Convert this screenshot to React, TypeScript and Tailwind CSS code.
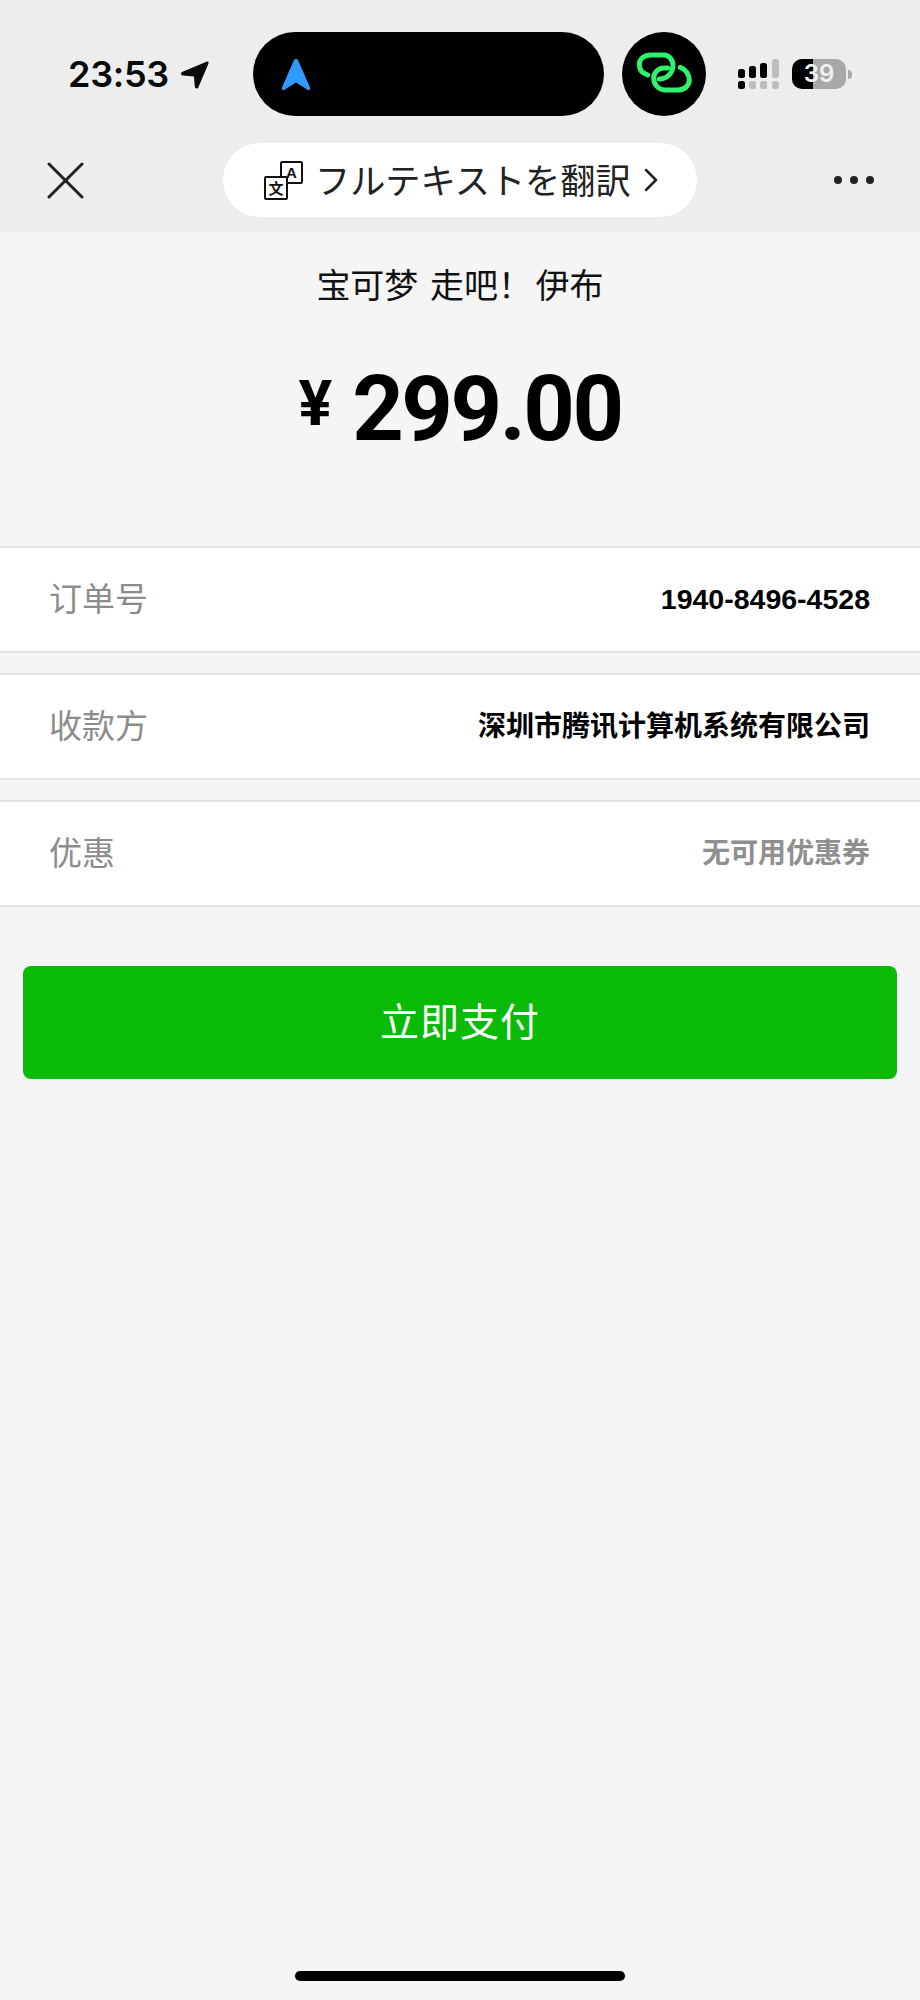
import React from "react";

const cjk = "font-['Liberation_Sans','Noto_Sans_CJK_SC',sans-serif]";

const rows = [
  { label: "订单号", value: "1940-8496-4528", valueClass: "text-black font-bold text-[28.5px]" },
  { label: "收款方", value: "深圳市腾讯计算机系统有限公司", valueClass: "text-black font-bold text-[28px]" },
  { label: "优惠", value: "无可用优惠券", valueClass: "text-[#8f8f8f] font-bold text-[28px]" },
];

const StatusBar = () => (
  <div className="flex items-center h-[84px] pl-[68px]">
    <span className="w-[101px] font-['Inter',sans-serif] text-[36px] font-semibold tracking-[-0.3px] text-[#0a0a0a] leading-none">
      23:53
    </span>
    {/* location arrow */}
    <svg className="ml-[11px] w-[30px] h-[30px]" viewBox="0 0 30 30">
      <path
        d="M26.500 2.800 C28 2.200 29 3.200 28.400 4.700 L18.500 28 C17.500 30.300 15 29.800 14.800 27.500 L14 17.500 L3 16.500 C.6 16.200 .3 13.800 2.500 12.800 Z"
        fill="#0a0a0a"
      />
    </svg>
    {/* dynamic island */}
    <div className="ml-[43px] w-[351px] h-[84px] rounded-[42px] bg-black flex items-center pl-[28px]">
      <svg className="w-[30px] h-[33px]" viewBox="0 0 30 33">
        <path
          d="M15 1 C16 1 16.800 1.500 17.300 2.800 L29 29.500 C29.800 31.500 28 32.800 26.500 31.800 L15 24.500 L3.500 31.800 C2 32.800 .2 31.500 1 29.500 L12.700 2.800 C13.200 1.500 14 1 15 1 Z"
          fill="#2f9bff"
        />
      </svg>
    </div>
    <div className="ml-[18px] w-[84px] h-[84px] rounded-full bg-black">
      <svg className="w-[84px] h-[84px]" viewBox="0 0 84 84" fill="none" stroke="#2ef36c" strokeWidth="5" strokeLinecap="round">
        <path d="M25.700 43 C20 41 17.300 37 17.300 33 C17.300 27 22 23 29 23 L42 23 C47 23 51 28 51 33 C51 41 45 47 37.300 47" />
        <path d="M45.700 36 L42 36 C36 36 31.700 41 31.700 46 C31.700 53 37 58 43 58 L56 58 C62 58 67.300 54 67.300 48 C67.300 42 63 37 58.300 35.300" />
      </svg>
    </div>
    {/* dual sim signal */}
    <svg className="ml-[32px] w-[41px] h-[30px]" viewBox="0 0 41 30">
      <rect x="0" y="10" width="7" height="9" rx="2.500" fill="#000" />
      <rect x="11" y="7" width="7" height="12" rx="2.500" fill="#000" />
      <rect x="22" y="4" width="7" height="15" rx="2.500" fill="#000" />
      <rect x="34" y="0" width="7" height="19" rx="2.500" fill="#bdbdbd" />
      <rect x="0" y="22" width="7" height="8" rx="2.500" fill="#000" />
      <rect x="11" y="22" width="7" height="8" rx="2.500" fill="#bdbdbd" />
      <rect x="22" y="22" width="7" height="8" rx="2.500" fill="#bdbdbd" />
      <rect x="34" y="22" width="7" height="8" rx="2.500" fill="#bdbdbd" />
    </svg>
    {/* battery */}
    <div className="ml-[13px] relative w-[54px] h-[30px] rounded-[10px] bg-[#a8a8a8] overflow-hidden">
      <div className="w-[21px] h-full bg-black" />
      <span className="absolute inset-0 flex items-center justify-center font-['Inter',sans-serif] text-[24px] font-semibold text-[#f0f0f0] leading-none">
        39
      </span>
    </div>
    <div className="ml-[2px] w-[4px] h-[9px] rounded-r-full bg-[#a8a8a8]" />
  </div>
);

const NavBar = () => (
  <div className="relative flex items-center justify-center mt-[27px] h-[74px]">
    {/* close */}
    <svg className="absolute left-[47px] top-[19px] w-[37px] h-[37px]" viewBox="0 0 37 37" stroke="#222" strokeWidth="3" strokeLinecap="round">
      <path d="M2 2 L35 35 M35 2 L2 35" />
    </svg>
    <div className="w-[474px] h-[74px] rounded-[37px] bg-white flex items-center pl-[41px]">
      {/* translate icon */}
      <div className="relative w-[39px] h-[39px] shrink-0">
        <div className="absolute right-0 top-0 w-[23px] h-[23px] border-2 border-[#111] rounded-[2px] flex items-center justify-center text-[15px] font-bold font-['Liberation_Sans',sans-serif] leading-none text-[#111]">
          A
        </div>
        <div className="absolute left-0 bottom-0 w-[24px] h-[24px] border-2 border-[#111] rounded-[2px] bg-white flex items-center justify-center text-[15px] font-bold font-['Noto_Sans_CJK_SC',sans-serif] leading-none text-[#111]">
          文
        </div>
      </div>
      <span className="ml-[12px] -mt-[3px] font-['Noto_Sans_CJK_JP',sans-serif] text-[35.2px] leading-none text-[#222] whitespace-nowrap">
        フルテキストを翻訳
      </span>
      <svg className="ml-[13px] w-[14px] h-[24px]" viewBox="0 0 14 24" fill="none" stroke="#222" strokeWidth="2.500" strokeLinecap="round" strokeLinejoin="round">
        <path d="M2 2 L12 12 L2 22" />
      </svg>
    </div>
    {/* more */}
    <div className="absolute left-[834px] top-[33px] flex gap-[8px]">
      <span className="w-[8px] h-[8px] rounded-full bg-[#222]" />
      <span className="w-[8px] h-[8px] rounded-full bg-[#222]" />
      <span className="w-[8px] h-[8px] rounded-full bg-[#222]" />
    </div>
  </div>
);

export default function App() {
  return (
    <div className={`flex flex-col w-[920px] h-[2000px] bg-[#f5f5f5] ${cjk}`}>
      <header className="h-[232px] bg-[#ededed] pt-[32px] shrink-0">
        <StatusBar />
        <NavBar />
      </header>

      <div className="mt-[31px] text-center text-[34px] leading-[42px] text-[#111] font-['Noto_Sans_CJK_SC',sans-serif] whitespace-pre">
        <span className="mr-[4px]">宝可梦</span> 走吧！<span className="-ml-[4px]"> 伊布</span>
      </div>

      <div className="mt-[60px] flex justify-center items-start font-['Roboto',sans-serif] font-bold text-black leading-none">
        <span className="mt-[7px] text-[63px] leading-none">¥</span>
        <span className="ml-[20px] text-[90px] leading-none tracking-[-2.5px]">299.00</span>
      </div>

      <div className="mt-[91px] flex flex-col gap-[20px]">
        {rows.map((row) => (
          <div
            key={row.label}
            className="h-[107px] bg-white border-y-2 border-[#e4e4e4] flex items-center justify-between pl-[49px] pr-[50px]"
          >
            <span className="-mt-[4px] text-[33px] text-[#8c8c8c] font-['Noto_Sans_CJK_SC',sans-serif]">{row.label}</span>
            <span className={row.valueClass}>{row.value}</span>
          </div>
        ))}
      </div>

      <button className="mt-[59px] mx-[23px] h-[113px] pb-[6px] rounded-[8px] bg-[#09bb07] text-white text-[39px] tracking-[1px] font-['Noto_Sans_CJK_SC',sans-serif]">
        立即支付
      </button>

      <div className="mt-auto mb-[19px] mx-auto w-[330px] h-[10px] rounded-full bg-black" />
    </div>
  );
}
